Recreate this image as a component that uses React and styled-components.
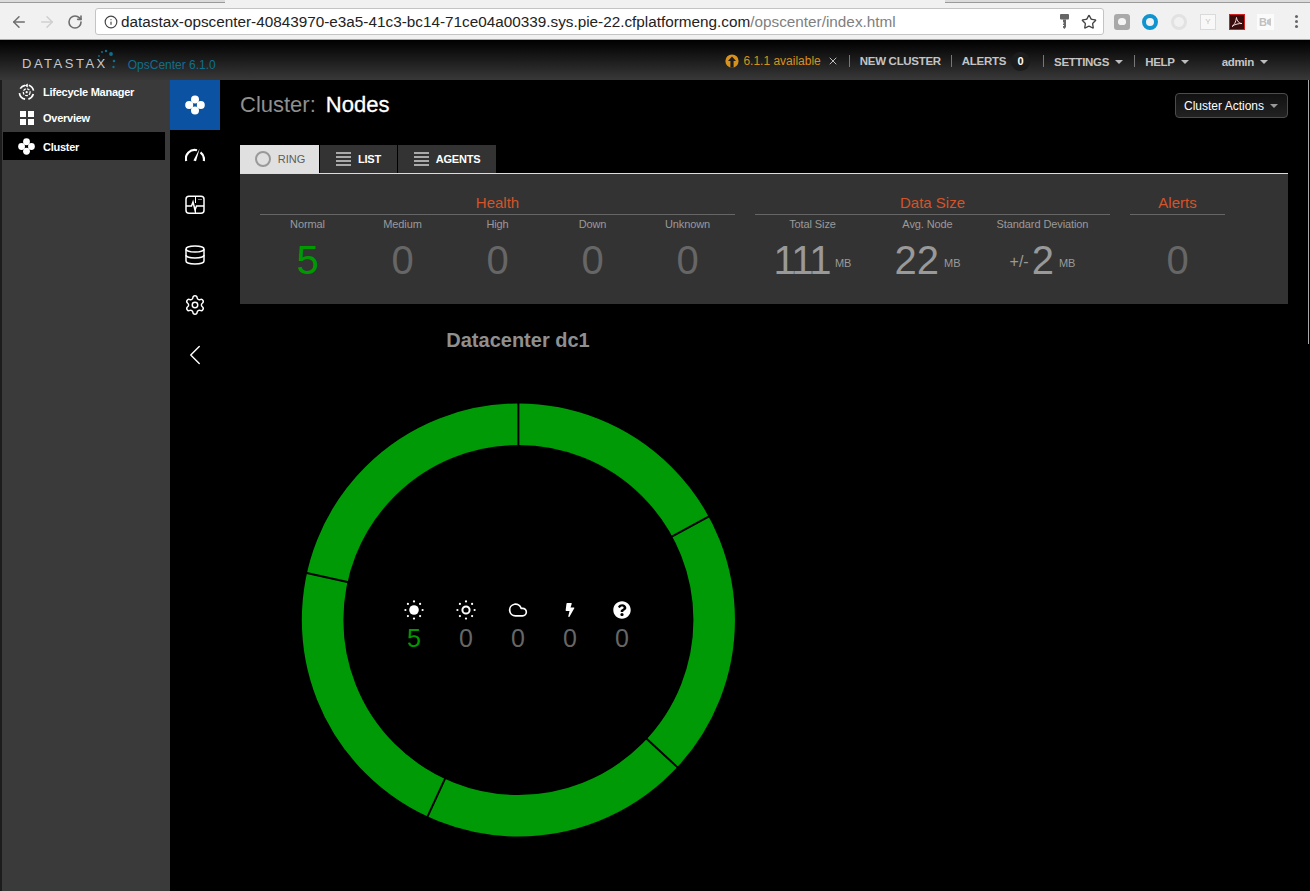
import React from "react";
import styled, { createGlobalStyle } from "styled-components";
import { ArrowLeft, ArrowRight, RotateCw, Info, Star, Cloud, Settings, ChevronLeft, X } from "lucide-react";
import { FaBolt, FaQuestionCircle } from "react-icons/fa";

const GlobalStyle = createGlobalStyle`
  html, body {
    margin: 0;
    padding: 0;
    background: #000;
    font-family: "Liberation Sans", Arial, sans-serif;
    -webkit-font-smoothing: antialiased;
  }
  * { box-sizing: border-box; }
`;

const Page = styled.div`
  width: 1310px;
  height: 891px;
  overflow: hidden;
  display: flex;
  flex-direction: column;
  position: relative;
`;

/* thin window edge that sits over the page on the right */
const WindowEdge = styled.i`
  position: absolute;
  top: 80px;
  right: 1px;
  width: 1px;
  height: 264px;
  background: #a8a8a8;
`;

/* browser toolbar */
const BrowserBar = styled.div`
  height: 40px;
  flex: none;
  display: flex;
  flex-direction: column;
  background: #f1f1f1;
  border-bottom: 1px solid #a8a8a8;
`;

const TabStrip = styled.div`
  height: 3px;
  flex: none;
  display: flex;
  background: #f1f1f1;
`;

const StripEdge = styled.i`
  width: ${(p) => p.$w}px;
  background: #dcdcdc;
  border-bottom: 1px solid #9a9a9a;
`;

const StripGap = styled.i`
  flex: 1;
`;

const BrowserRow = styled.div`
  flex: 1;
  display: flex;
  align-items: center;
  padding: 1px 0 0 9px;
`;

const BrowserButton = styled.span`
  width: 19px;
  margin-right: 9px;
  display: flex;
  justify-content: center;
  color: ${(p) => (p.$off ? "#cfcfcf" : "#6e6e6e")};
`;

const AddressBar = styled.div`
  width: 1009px;
  height: 27px;
  margin-left: 2px;
  display: flex;
  align-items: center;
  padding: 0 6px 0 8px;
  background: #fff;
  border: 1px solid #c4c4c4;
  border-radius: 3px;
`;

const Url = styled.span`
  flex: 1;
  margin-left: 3px;
  font-size: 15.3px;
  color: #222;
  white-space: nowrap;
`;

const UrlRest = styled.span`
  color: #808080;
`;

const AddressIcon = styled.span`
  display: flex;
  margin-left: 12px;
  color: ${(p) => p.$color || "#444"};
`;

const Extensions = styled.div`
  flex: 1;
  display: flex;
  align-items: center;
  padding-left: 10px;
  gap: 12px;
`;

const Ext = styled.span`
  width: 16px;
  height: 16px;
  flex: none;
  display: flex;
  align-items: center;
  justify-content: center;
`;

const GreyExt = styled(Ext)`
  background: #a9a9a9;
  border-radius: 3px;
`;

const GreyBlob = styled.i`
  width: 8px;
  height: 7px;
  background: #f4f4f4;
  border-radius: 50% 50% 40% 40%;
`;

const RingExt = styled(Ext)`
  border: 4px solid #1094cf;
  border-radius: 50%;
`;

const PaleExt = styled(Ext)`
  margin-left: 1px;
  border: 3px solid #e2e2e2;
  border-radius: 50%;
`;

const DocExt = styled(Ext)`
  margin-left: 1px;
  background: #f8f8f8;
  border: 1px solid #dadada;
  color: #c4c4c4;
  font-size: 8px;
`;

const PdfExt = styled(Ext)`
  margin-left: 1px;
  background: #3a0c0c;
  border: 1px solid #d02020;
`;

const BoxExt = styled(Ext)`
  width: 17px;
  background: #fbfbfb;
  color: #c0c0c0;
  font-size: 11px;
  font-weight: 700;
`;

const MenuDots = styled.span`
  width: 3px;
  height: 3px;
  margin-left: 9px;
  border-radius: 50%;
  background: #666;
  box-shadow: 0 -5px 0 #666, 0 5px 0 #666;
`;

/* app nav */
const NavBar = styled.header`
  height: 40px;
  flex: none;
  display: flex;
  align-items: center;
  justify-content: space-between;
  padding: 0 41px 0 22px;
  background: linear-gradient(#000, #383838);
`;

const Brand = styled.div`
  display: flex;
  align-items: center;
  position: relative;
  padding-top: 9px;
`;

const BrandName = styled.span`
  font-size: 13px;
  letter-spacing: 2.5px;
  color: #c8c8c8;
  margin-top: -2px;
`;

const BrandDots = styled.svg`
  position: absolute;
  left: 75px;
  top: -2px;
`;

const Product = styled.span`
  margin-left: 20px;
  font-size: 12px;
  color: #0f6f8c;
`;

const NavItems = styled.nav`
  display: flex;
  align-items: center;
  padding-top: 2px;
`;

const UpdateText = styled.span`
  margin-left: 4px;
  font-size: 12px;
  color: #d8911c;
`;

const CloseMark = styled.span`
  display: flex;
  margin-left: 6px;
  color: #bdbdbd;
`;

const NavLink = styled.span`
  font-size: 11.5px;
  font-weight: 700;
  letter-spacing: -0.3px;
  color: #c4c4c4;
  white-space: nowrap;
  display: flex;
  align-items: center;
  margin-left: ${(p) => p.$ml || 0}px;
  padding-top: ${(p) => (p.$low ? 1 : 0)}px;
`;

const Divider = styled.span`
  width: 1px;
  height: 12px;
  margin: 0 10px;
  background: #777;
`;

const Badge = styled.span`
  width: 19px;
  height: 19px;
  margin: 0 3px 0 5px;
  border-radius: 50%;
  background: #1c1c1c;
  color: #fff;
  font-size: 11px;
  font-weight: 700;
  display: flex;
  align-items: center;
  justify-content: center;
`;

const Caret = styled.i`
  width: 0;
  height: 0;
  margin-left: ${(p) => p.$gap || 6}px;
  margin-right: 1px;
  border-left: 4px solid transparent;
  border-right: 4px solid transparent;
  border-top: 4px solid ${(p) => p.$color || "#bdbdbd"};
`;

const Body = styled.div`
  flex: 1;
  display: flex;
  min-height: 0;
`;

/* left tree */
const Sidebar = styled.aside`
  width: 170px;
  flex: none;
  padding: 0 5px 0 1px;
  background: #3a3a3a;
  border-left: 2px solid #1c1c1c;
`;

const SideItem = styled.div`
  height: ${(p) => p.$h}px;
  display: flex;
  align-items: center;
  padding: ${(p) => (p.$active ? "1px 0 0 15px" : "0 0 0 15px")};
  gap: 8px;
  font-size: 11px;
  font-weight: 700;
  letter-spacing: -0.25px;
  color: #fff;
  background: ${(p) => (p.$active ? "#000" : "transparent")};
`;

const IconSlot = styled.span`
  width: 17px;
  flex: none;
  display: flex;
  justify-content: center;
  color: #fff;
`;

const TileGrid = styled.span`
  display: grid;
  grid-template-columns: 6px 6px;
  grid-auto-rows: 6px;
  gap: 2px;
`;

const Tile = styled.i`
  background: #fff;
`;

/* icon rail */
const Rail = styled.div`
  width: 50px;
  flex: none;
  background: #000;
`;

const RailItem = styled.div`
  height: 50px;
  display: flex;
  align-items: center;
  justify-content: center;
  color: #fff;
  background: ${(p) => (p.$active ? "#0b52a2" : "transparent")};
`;

/* content */
const Main = styled.main`
  flex: 1;
  padding: 0 22px 0 20px;
  background: #000;
`;

const TitleRow = styled.div`
  height: 50px;
  display: flex;
  align-items: center;
  justify-content: space-between;
`;

const Title = styled.h1`
  margin: 0;
  font-size: 22px;
  font-weight: 400;
  color: #8f8f8f;
`;

const TitleStrong = styled.span`
  margin-left: 10px;
  color: #fff;
  -webkit-text-stroke: 0.3px #fff;
`;

const ActionButton = styled.button`
  height: 25px;
  width: 113px;
  padding: 1px 0 0;
  display: flex;
  align-items: center;
  justify-content: center;
  font-family: inherit;
  font-size: 12px;
  color: #fff;
  background: linear-gradient(#111, #222);
  border: 1px solid #4c4c4c;
  border-radius: 4px;
`;

const Tabs = styled.div`
  margin-top: 15px;
  display: flex;
  height: 28px;
`;

const Tab = styled.div`
  width: ${(p) => p.$w}px;
  display: flex;
  align-items: center;
  justify-content: center;
  gap: 7px;
  margin-right: 1px;
  font-size: 11px;
  font-weight: ${(p) => (p.$active ? 400 : 700)};
  letter-spacing: ${(p) => (p.$active ? "0" : "-0.2px")};
  color: ${(p) => (p.$active ? "#5c5c5c" : "#fff")};
  background: ${(p) => (p.$active ? "#e0e0e0" : "#333")};
`;

const RingMark = styled.span`
  width: 16px;
  height: 16px;
  margin-left: 1px;
  border: 2px solid #999;
  border-radius: 50%;
`;

const StatsPanel = styled.section`
  height: 131px;
  padding: 21px 20px 0;
  display: flex;
  gap: 20px;
  background: #333;
  border-top: 1px solid #ddd;
`;

const StatGroup = styled.div`
  width: ${(p) => p.$w}px;
`;

const GroupTitle = styled.div`
  height: 20px;
  text-align: center;
  font-size: 15px;
  line-height: 15px;
  color: #d4542a;
  border-bottom: 1px solid #666;
`;

const StatCols = styled.div`
  display: flex;
`;

const Stat = styled.div`
  width: ${(p) => p.$w}px;
  flex: none;
  text-align: center;
`;

const StatLabel = styled.div`
  margin-top: 2px;
  height: 17px;
  font-size: 11px;
  line-height: 14px;
  letter-spacing: -0.1px;
  white-space: nowrap;
  color: #9a9a9a;
`;

const StatValue = styled.div`
  height: 46px;
  margin-top: 3px;
  font-size: 40px;
  line-height: 46px;
  letter-spacing: ${(p) => p.$tight || 0}px;
  white-space: nowrap;
  color: ${(p) => p.$color || "#666"};
`;

const Unit = styled.span`
  margin-left: 5px;
  font-size: 11px;
  line-height: 1;
  letter-spacing: 0;
  vertical-align: 7px;
  color: #9a9a9a;
`;

const Prefix = styled.span`
  margin-right: 3px;
  font-size: 16px;
  line-height: 1;
  vertical-align: 7px;
  color: #9a9a9a;
`;

/* datacenter ring */
const Datacenter = styled.section`
  width: 436px;
  margin: 24px 0 0 60px;
  position: relative;
`;

const DcTitle = styled.h2`
  margin: 0 0 50px;
  height: 24px;
  font-size: 20px;
  line-height: 24px;
  text-align: center;
  color: #8f8f8f;
`;

const RingChart = styled.svg`
  display: block;
`;

const Legend = styled.div`
  position: absolute;
  left: 0;
  right: 0;
  top: 272px;
  display: flex;
  justify-content: center;
`;

const LegendItem = styled.div`
  width: 52px;
  display: flex;
  flex-direction: column;
  align-items: center;
  color: #fff;
`;

const LegendIcon = styled.span`
  height: 20px;
  display: flex;
  align-items: center;
`;

const LegendCount = styled.span`
  margin-top: 3px;
  font-size: 25px;
  line-height: 30px;
  color: ${(p) => p.$color || "#666"};
`;

const ClusterIcon = ({ size = 18 }) => (
  <svg width={size} height={size} viewBox="0 0 20 20" fill="#fff">
    <circle cx="10" cy="4.4" r="4" />
    <circle cx="10" cy="15.6" r="4" />
    <circle cx="4.2" cy="10" r="4" />
    <circle cx="15.8" cy="10" r="4" />
  </svg>
);

const LifecycleIcon = () => (
  <svg width="18" height="18" viewBox="0 0 18 18" fill="none" stroke="#fff">
    <path strokeWidth="1.8" d="M2.4 5.4A7.6 7.6 0 0 1 7.4 1.9M11.5 1.9A7.6 7.6 0 0 1 16.4 7.5M16.2 11.2A7.6 7.6 0 0 1 11 16.5M7.5 16.6A7.6 7.6 0 0 1 1.5 10.2" />
    <path d="M10.4 0L7 2l3.4 2.2z" fill="#fff" stroke="none" />
    <circle cx="9.2" cy="9.2" r="3.6" strokeWidth="1.3" strokeDasharray="3 1.2" />
    <circle cx="9.2" cy="9.2" r="1.2" fill="#fff" stroke="none" />
  </svg>
);

const GaugeIcon = () => (
  <svg width="20" height="14" viewBox="0 0 20 14" fill="none" stroke="#fff" strokeWidth="2.2">
    <path d="M1.2 13A8.8 8.8 0 0 1 12 2.2M15.5 4.4A8.8 8.8 0 0 1 18.8 13" />
    <path d="M8.4 12.6L14.6 .8L11 13.2z" fill="#fff" stroke="none" />
  </svg>
);

const MonitorIcon = () => (
  <svg width="20" height="20" viewBox="0 0 20 20" fill="none" stroke="#fff" strokeWidth="1.5">
    <rect x="1" y="1.2" width="18" height="17" rx="3" />
    <path d="M1 11h5.5l1.5-4 2 8 1.5-4H19" />
    <path d="M10.5 1.2V8M10.5 14v4" strokeWidth="1" />
    <path d="M13.5 4.5h1M15.5 4.5h1" strokeWidth="1.2" />
  </svg>
);

const DatabaseIcon = () => (
  <svg width="20" height="20" viewBox="0 0 20 20" fill="none" stroke="#fff" strokeWidth="1.5">
    <ellipse cx="10" cy="4" rx="9" ry="3" />
    <path d="M1 4v12c0 1.7 4 3 9 3s9-1.3 9-3V4" />
    <path d="M1 10c0 1.7 4 3 9 3s9-1.3 9-3" />
  </svg>
);

const SunIcon = ({ hollow }) => (
  <svg width="20" height="20" viewBox="0 0 20 20" fill="#fff">
    {hollow ? (
      <circle cx="10" cy="10" r="3.6" fill="none" stroke="#fff" strokeWidth="2" />
    ) : (
      <circle cx="10" cy="10" r="4.8" />
    )}
    <circle cx="10" cy="1.4" r="1.1" />
    <circle cx="10" cy="18.6" r="1.1" />
    <circle cx="1.4" cy="10" r="1.1" />
    <circle cx="18.6" cy="10" r="1.1" />
    <circle cx="3.9" cy="3.9" r="1.1" />
    <circle cx="16.1" cy="3.9" r="1.1" />
    <circle cx="3.9" cy="16.1" r="1.1" />
    <circle cx="16.1" cy="16.1" r="1.1" />
  </svg>
);

const ListIcon = ({ color }) => (
  <svg width="15" height="14" viewBox="0 0 15 14" fill={color}>
    <rect y="0" width="15" height="2" />
    <rect y="4" width="15" height="2" />
    <rect y="8" width="15" height="2" />
    <rect y="12" width="15" height="2" />
  </svg>
);

const UpdateIcon = () => (
  <svg width="14" height="14" viewBox="0 0 14 14">
    <circle cx="7" cy="7" r="6.6" fill="#d8911c" />
    <path d="M7 2.6L11 7H8.6v6.4H5.4V7H3z" fill="#1d1d1d" />
  </svg>
);

const KeyIcon = () => (
  <svg width="9" height="15" viewBox="0 0 9 15" fill="#666">
    <rect x="0" y="0" width="9" height="5.5" rx="1" />
    <path d="M3 5.5h3V13L4.5 15 3 13.5V12h1v-1H3V9.5h1v-1H3z" />
  </svg>
);

const PdfGlyph = () => (
  <svg width="12" height="12" viewBox="0 0 12 12" fill="none" stroke="#f0dcdc" strokeWidth="1">
    <path d="M1 10.5C3 9.5 5 6 5.5 1.5C6 5 8 7.5 11 7.5C8 7.5 4 8 1 10.5z" />
  </svg>
);

const CameraGlyph = () => (
  <svg width="5" height="10" viewBox="0 0 5 10" fill="#c8c8c8">
    <path d="M0 3l4-2v8L0 7z" />
  </svg>
);

const Dots = () => (
  <BrandDots width="24" height="24" viewBox="0 0 24 24" fill="#0f6f8c">
    <circle cx="2" cy="9" r="0.9" />
    <circle cx="5" cy="5" r="1" />
    <circle cx="9" cy="4" r="1.2" />
    <circle cx="14" cy="7" r="1.9" />
    <circle cx="17" cy="14" r="1.3" />
    <circle cx="16.5" cy="20" r="1.2" />
  </BrandDots>
);

const CX = 218.4;
const CY = 218;

const RING_CUTS = [0, 61.5, 132.8, 204.8, 282.5];

const cutLine = (deg) => {
  const a = (deg * Math.PI) / 180;
  return {
    x1: CX + Math.sin(a) * 174,
    y1: CY - Math.cos(a) * 174,
    x2: CX + Math.sin(a) * 218,
    y2: CY - Math.cos(a) * 218,
  };
};

const healthStats = [
  { label: "Normal", value: 5, color: "#009a00" },
  { label: "Medium", value: 0 },
  { label: "High", value: 0 },
  { label: "Down", value: 0 },
  { label: "Unknown", value: 0 },
];

const legend = [
  { icon: <SunIcon />, count: 5, color: "#009a00" },
  { icon: <SunIcon hollow />, count: 0 },
  { icon: <Cloud size={20} strokeWidth={2} />, count: 0 },
  { icon: <FaBolt size={14} />, count: 0 },
  { icon: <FaQuestionCircle size={18} />, count: 0 },
];

const App = () => (
  <Page>
    <GlobalStyle />
    <BrowserBar>
      <TabStrip>
        <StripEdge $w={225} />
        <StripGap />
        <StripEdge $w={365} />
      </TabStrip>
      <BrowserRow>
        <BrowserButton><ArrowLeft size={18} /></BrowserButton>
        <BrowserButton $off><ArrowRight size={18} /></BrowserButton>
        <BrowserButton><RotateCw size={16} strokeWidth={2.4} /></BrowserButton>
        <AddressBar>
          <Info size={14} color="#444" />
          <Url>
            datastax-opscenter-40843970-e3a5-41c3-bc14-71ce04a00339.sys.pie-22.cfplatformeng.com
            <UrlRest>/opscenter/index.html</UrlRest>
          </Url>
          <AddressIcon><KeyIcon /></AddressIcon>
          <AddressIcon><Star size={16} /></AddressIcon>
        </AddressBar>
        <Extensions>
          <GreyExt><GreyBlob /></GreyExt>
          <RingExt />
          <PaleExt />
          <DocExt>Y</DocExt>
          <PdfExt><PdfGlyph /></PdfExt>
          <BoxExt>B<CameraGlyph /></BoxExt>
          <MenuDots />
        </Extensions>
      </BrowserRow>
    </BrowserBar>

    <NavBar>
      <Brand>
        <BrandName>DATASTAX</BrandName>
        <Dots />
        <Product>OpsCenter 6.1.0</Product>
      </Brand>
      <NavItems>
        <UpdateIcon />
        <UpdateText>6.1.1 available</UpdateText>
        <CloseMark><X size={12} /></CloseMark>
        <Divider />
        <NavLink>NEW CLUSTER</NavLink>
        <Divider />
        <NavLink>ALERTS<Badge>0</Badge></NavLink>
        <Divider />
        <NavLink $low>SETTINGS<Caret /></NavLink>
        <Divider />
        <NavLink $low>HELP<Caret /></NavLink>
        <NavLink $low $ml={32}>admin<Caret /></NavLink>
      </NavItems>
    </NavBar>

    <Body>
      <Sidebar>
        <SideItem $h={24}>
          <IconSlot><LifecycleIcon /></IconSlot>Lifecycle Manager
        </SideItem>
        <SideItem $h={28}>
          <IconSlot>
            <TileGrid><Tile /><Tile /><Tile /><Tile /></TileGrid>
          </IconSlot>
          Overview
        </SideItem>
        <SideItem $h={28} $active>
          <IconSlot><ClusterIcon size={17} /></IconSlot>Cluster
        </SideItem>
      </Sidebar>

      <Rail>
        <RailItem $active><ClusterIcon size={20} /></RailItem>
        <RailItem><GaugeIcon /></RailItem>
        <RailItem><MonitorIcon /></RailItem>
        <RailItem><DatabaseIcon /></RailItem>
        <RailItem><Settings size={22} strokeWidth={1.6} /></RailItem>
        <RailItem><ChevronLeft size={34} strokeWidth={1} /></RailItem>
      </Rail>

      <Main>
        <TitleRow>
          <Title>Cluster:<TitleStrong>Nodes</TitleStrong></Title>
          <ActionButton>Cluster Actions<Caret $color="#999" /></ActionButton>
        </TitleRow>

        <Tabs>
          <Tab $w={79} $active><RingMark />RING</Tab>
          <Tab $w={77}><ListIcon color="#aaa" />LIST</Tab>
          <Tab $w={98}><ListIcon color="#aaa" />AGENTS</Tab>
        </Tabs>

        <StatsPanel>
          <StatGroup $w={475}>
            <GroupTitle>Health</GroupTitle>
            <StatCols>
              {healthStats.map((s) => (
                <Stat $w={95} key={s.label}>
                  <StatLabel>{s.label}</StatLabel>
                  <StatValue $color={s.color}>{s.value}</StatValue>
                </Stat>
              ))}
            </StatCols>
          </StatGroup>
          <StatGroup $w={355}>
            <GroupTitle>Data Size</GroupTitle>
            <StatCols>
              <Stat $w={115}>
                <StatLabel>Total Size</StatLabel>
                <StatValue $color="#999" $tight={-1.5}>111<Unit>MB</Unit></StatValue>
              </Stat>
              <Stat $w={115}>
                <StatLabel>Avg. Node</StatLabel>
                <StatValue $color="#999">22<Unit>MB</Unit></StatValue>
              </Stat>
              <Stat $w={115}>
                <StatLabel>Standard Deviation</StatLabel>
                <StatValue $color="#999"><Prefix>+/-</Prefix>2<Unit>MB</Unit></StatValue>
              </Stat>
            </StatCols>
          </StatGroup>
          <StatGroup $w={95}>
            <GroupTitle>Alerts</GroupTitle>
            <StatCols>
              <Stat $w={95}>
                <StatLabel>&nbsp;</StatLabel>
                <StatValue>0</StatValue>
              </Stat>
            </StatCols>
          </StatGroup>
        </StatsPanel>

        <Datacenter>
          <DcTitle>Datacenter dc1</DcTitle>
          <RingChart width="436" height="436" viewBox="0 0 436 436">
            <circle cx={CX} cy={CY} r="195.8" fill="none" stroke="#009a06" strokeWidth="41.5" />
            {RING_CUTS.map((deg) => (
              <line key={deg} {...cutLine(deg)} stroke="#000" strokeWidth="2" />
            ))}
          </RingChart>
          <Legend>
            {legend.map((item, i) => (
              <LegendItem key={i}>
                <LegendIcon>{item.icon}</LegendIcon>
                <LegendCount $color={item.color}>{item.count}</LegendCount>
              </LegendItem>
            ))}
          </Legend>
        </Datacenter>
      </Main>
    </Body>
    <WindowEdge />
  </Page>
);

export default App;
